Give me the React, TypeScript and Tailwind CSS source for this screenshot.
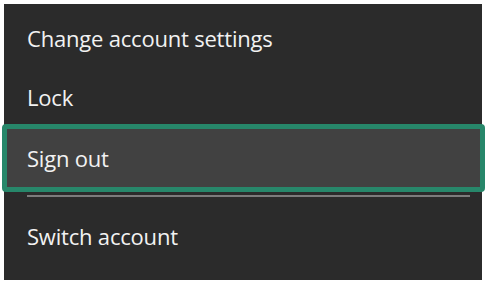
import React from "react";

export default function App() {
  const font = { fontFamily: '"Open Sans", "Noto Sans", sans-serif' };
  return (
    <div className="w-[487px] h-[287px] bg-white overflow-hidden pt-[4px] pl-[4px]" style={font}>
      <div className="w-[478px] h-[276px] bg-[#2b2b2b] flex flex-col text-[22px] tracking-[-0.2px] text-[#f2f2f2]">
        <div className="h-[62px] flex items-center pl-[23px] pt-[6px]">Change account settings</div>
        <div className="h-[58px] flex items-center pl-[23px] pt-[4px]">Lock</div>
        <div className="h-[68px] ml-[-2px] mr-[-3px] border-[5px] border-[#27876a] rounded-[4px] bg-[#414141] flex items-center pl-[20px]">
          Sign out
        </div>
        <div className="mt-[3px] ml-[23px] mr-[12px] h-[2px] bg-[#7c7c7c]" />
        <div className="flex-1 flex items-center pl-[23px] pb-[4px]">Switch account</div>
      </div>
    </div>
  );
}
